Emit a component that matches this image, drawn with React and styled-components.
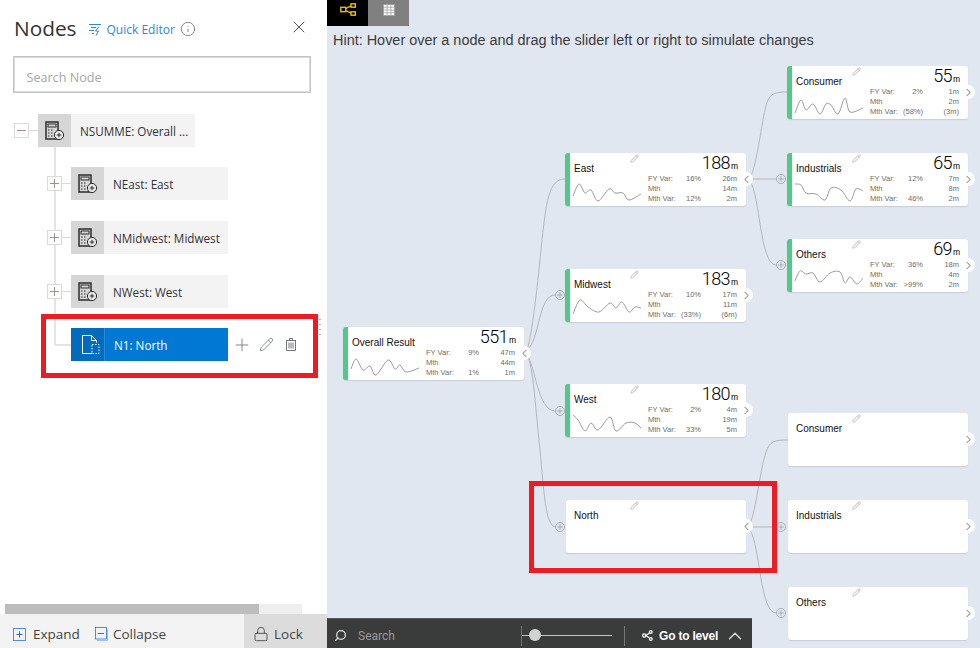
import React from "react";
import styled, { createGlobalStyle } from "styled-components";
import { ChevronLeft, ChevronRight, ChevronUp, Info, Lock, Pencil, Plus, Search, X } from "lucide-react";

const PANEL_WIDTH = 327;

const GlobalStyle = createGlobalStyle`
  html, body {
    margin: 0;
    padding: 0;
    height: 648px;
    overflow: hidden;
    background: #fff;
    font-family: "Liberation Sans", Arial, sans-serif;
  }
  * {
    box-sizing: border-box;
  }
`;

const Page = styled.div`
  display: grid;
  grid-template-columns: ${PANEL_WIDTH}px 1fr;
  width: 980px;
  height: 648px;
  overflow: hidden;
`;

/* ---------- left panel ---------- */

const Panel = styled.aside`
  position: relative;
  display: flex;
  flex-direction: column;
  height: 648px;
  background: #fff;
  font-family: "Open Sans", "Noto Sans", sans-serif;
  color: #333;
`;

const PanelHead = styled.header`
  display: flex;
  align-items: center;
  height: 56px;
  padding: 0 18.5px 0 14px;
`;

const PanelTitle = styled.h1`
  margin: 0;
  font-size: 20.8px;
  font-weight: 400;
  color: #333;
`;

const QuickEditor = styled.a`
  display: flex;
  align-items: center;
  gap: 4px;
  margin: 2px 0 0 12px;
  font-size: 12px;
  color: #2b88d8;
`;

const InfoIcon = styled(Info)`
  margin: 2px 0 0 5px;
  color: #777;
`;

const CloseIcon = styled(X)`
  margin: -2px 0 0 auto;
  color: #555;
`;

const SearchBox = styled.div`
  display: flex;
  align-items: center;
  width: 298px;
  height: 37px;
  margin-left: 13px;
  padding: 5px 0 0 12.5px;
  border: 1px solid #c4c4c4;
  box-shadow: inset 0 0 0 1px #dcdcdc;
  font-size: 12.6px;
  color: #a6a6a6;
`;

const Tree = styled.div`
  display: flex;
  flex-direction: column;
  gap: 20px;
  margin-top: 21px;
  padding-left: 14px;
`;

const TreeChildren = styled.div`
  position: relative;
  display: flex;
  flex-direction: column;
  gap: 21px;
  padding-left: 33px;

  &::before {
    content: "";
    position: absolute;
    left: 40px;
    top: -20px;
    bottom: 16px;
    width: 2px;
    background: #e4e4e4;
  }
`;

const TreeRow = styled.div`
  position: relative;
  display: flex;
  align-items: center;
  height: 33px;

  ${TreeChildren} > &:last-child {
    margin-top: -1px;
  }
`;

const Expander = styled.span`
  position: relative;
  display: flex;
  align-items: center;
  justify-content: center;
  width: 15px;
  height: 15px;
  margin-right: 9px;
  border: 1px solid #dadada;
  background: #fff;
  color: #a39090;
  z-index: 1;

  &::after {
    content: "";
    position: absolute;
    left: 14px;
    top: 6px;
    width: 9px;
    height: 1px;
    background: #dadada;
  }
`;

const LeafStub = styled.span`
  width: 16px;
  height: 2px;
  margin-left: 8px;
  background: #e4e4e4;
`;

const NodeIcon = styled.span`
  display: flex;
  align-items: center;
  justify-content: center;
  width: 33px;
  height: 33px;
  background: ${(p) => (p.$selected ? "#006cbe" : "#d6d6d6")};

  svg {
    margin-left: ${(p) => (p.$selected ? "6px" : "0")};
  }
`;

const NodeLabel = styled.span`
  display: flex;
  align-items: center;
  width: 124px;
  height: 33px;
  padding-left: 9px;
  font-size: 11.7px;
  white-space: nowrap;
  background: ${(p) => (p.$selected ? "#0078d4" : "#f3f3f3")};
  color: ${(p) => (p.$selected ? "#fff" : "#333")};
  border-left: ${(p) => (p.$selected ? "1px solid #2b88d8" : "none")};
`;

const RowActions = styled.div`
  display: flex;
  align-items: center;
  gap: 7px;
  margin-left: 4px;
  color: #7d8496;

  svg:last-child {
    margin-left: 5px;
  }
`;

const DragDots = styled.div`
  position: absolute;
  left: 316px;
  top: 319px;
  display: grid;
  grid-template-columns: 2px 2px;
  gap: 4px 1px;

  span {
    width: 2px;
    height: 1px;
    background: #b5b5b5;
  }
`;

const ScrollTrack = styled.div`
  width: 297px;
  height: 10px;
  margin: auto 0 0 5px;
  background: #eeeeee;
`;

const ScrollThumb = styled.div`
  width: 254px;
  height: 10px;
  background: #bdbdbd;
`;

const PanelFoot = styled.footer`
  display: flex;
  align-items: stretch;
  height: 34px;
  background: #f3f3f3;
  font-size: 13.5px;
  color: #444;
`;

const FootButton = styled.span`
  display: flex;
  align-items: center;
  gap: ${(p) => p.$iconGap}px;
  padding-top: 6px;
  margin-left: ${(p) => p.$gap}px;
`;

const LockButton = styled.span`
  display: flex;
  align-items: center;
  gap: 5px;
  width: 83px;
  margin-left: auto;
  padding: 6px 0 0 9px;
  background: #dcdcdc;
`;

const RedBox = styled.div`
  position: absolute;
  left: ${(p) => p.$x}px;
  top: ${(p) => p.$y}px;
  width: ${(p) => p.$w}px;
  height: ${(p) => p.$h}px;
  border: 5px solid #ed1c24;
  z-index: 5;
  pointer-events: none;
`;

/* ---------- canvas ---------- */

const Canvas = styled.main`
  position: relative;
  display: flex;
  flex-direction: column;
  height: 648px;
  background: #e1e7f0;
`;

const Tabs = styled.div`
  display: flex;
  height: 26px;
`;

const Tab = styled.span`
  display: flex;
  justify-content: center;
  width: 41px;
  height: 26px;
  padding-top: ${(p) => (p.$active ? "3px" : "4px")};
  background: ${(p) => (p.$active ? "#000" : "#808080")};
`;

const Hint = styled.p`
  margin: 6px 0 0 6px;
  font-size: 14.45px;
  line-height: 16px;
  color: #3c3c3c;
`;

const Links = styled.svg`
  position: absolute;
  left: 0;
  top: 0;
  width: 653px;
  height: 648px;
`;

const Card = styled.div`
  position: absolute;
  left: ${(p) => p.$x - PANEL_WIDTH + (p.$filled ? 0 : 1)}px;
  top: ${(p) => p.$y}px;
  display: grid;
  grid-template-columns: 78px 1fr;
  width: ${(p) => (p.$filled ? 181 : 180)}px;
  height: 53px;
  padding-left: ${(p) => (p.$filled ? "0" : "4px")};
  background: #fff;
  border-radius: 3px;
  border-left: ${(p) => (p.$filled ? "5px solid #4fcb86" : "none")};
  box-shadow: 0 1px 1px rgba(120, 130, 150, 0.25);
`;

const CardTitle = styled.div`
  position: relative;
  padding: 9.5px 0 0 4px;
  font-size: 10px;
  line-height: 12px;
  color: #111;
`;

const Spark = styled.svg`
  position: absolute;
  left: -5px;
  top: 0;
  width: 85px;
  height: 53px;
`;

const CardData = styled.div`
  display: flex;
  flex-direction: column;
  padding-right: 8px;
`;

const CardValue = styled.div`
  height: 21px;
  padding-top: 1px;
  text-align: right;
  font-family: "Roboto", "Liberation Sans", sans-serif;
  font-size: 18px;
  font-weight: 300;
  line-height: 18px;
  letter-spacing: -0.6px;
  color: #000;

  small {
    margin-left: 1px;
    font-family: "Liberation Sans", sans-serif;
    font-size: 8.5px;
    font-weight: 400;
    letter-spacing: 0;
  }
`;

const Stats = styled.div`
  display: grid;
  grid-template-columns: 32px 21px 36px;
  grid-auto-rows: 10px;
  font-size: 7.5px;
  line-height: 10px;
  color: #6c6c6c;

  span:not(:nth-child(3n + 1)) {
    text-align: right;
  }
`;

const CardPencil = styled(Pencil)`
  position: absolute;
  left: 60px;
  top: 1px;
  color: #d0d0d4;
`;

const Toggle = styled.span`
  position: absolute;
  right: -7px;
  top: 19px;
  display: flex;
  align-items: center;
  justify-content: center;
  width: 14px;
  height: 14px;
  border-radius: 50%;
  background: #fff;
  color: #8a8a8a;
`;

const AddDot = styled.span`
  position: absolute;
  left: ${(p) => p.$x - PANEL_WIDTH - 5}px;
  top: ${(p) => p.$y - 5}px;
  display: flex;
  align-items: center;
  justify-content: center;
  width: 10px;
  height: 10px;
  border: 1px solid #a8adb5;
  border-radius: 50%;
  background: #e1e7f0;
  color: #a0a5ad;
`;

const ToolBar = styled.div`
  position: relative;
  display: flex;
  align-items: center;
  width: 425px;
  height: 30px;
  margin-top: auto;
  padding-top: 4px;
  background: #3a3b3b;
  border-top: 1px solid #55585c;
  color: #fff;
  z-index: 3;
`;

const ToolSearch = styled.span`
  display: flex;
  align-items: center;
  gap: 11px;
  width: 194px;
  padding-left: 7px;
  font-family: "Roboto", "Liberation Sans", sans-serif;
  font-size: 12px;
  color: #9a9a9a;
`;

const MirrorSearch = styled(Search)`
  transform: scaleX(-1);
  color: #e6e6e6;
`;

const Divider = styled.span`
  width: 1px;
  height: 20px;
  background: #777;
`;

const Slider = styled.span`
  position: relative;
  width: 90px;
  height: 1px;
  margin-right: 12px;
  background: #c4c4c4;

  &::before {
    content: "";
    position: absolute;
    left: 7px;
    top: -6px;
    width: 12px;
    height: 12px;
    border-radius: 50%;
    background: #d2d2d2;
  }
`;

const LevelButton = styled.span`
  display: flex;
  align-items: center;
  gap: 6px;
  margin-left: 17px;
  font-size: 12px;
  font-weight: 700;
  letter-spacing: -0.2px;
`;

const LevelChevron = styled(ChevronUp)`
  color: #ddd;
`;

/* ---------- drawings ---------- */

const FlowIcon = () => (
  <svg width="16" height="13" viewBox="0 0 16 13" fill="none" stroke="#e8bc00" strokeWidth="1.4">
    <rect x="0.8" y="4.3" width="5" height="4.400" />
    <rect x="11" y="0.8" width="4.3" height="3.400" />
    <rect x="11" y="8.800" width="4.3" height="3.400" />
    <path d="M5.800 5.500L11 2.800M5.800 7.500L11 10.200" />
  </svg>
);

const LevelIcon = () => (
  <svg width="11" height="11" viewBox="0 0 11 11" fill="none" stroke="#fff" strokeWidth="1.200">
    <circle cx="2.200" cy="5.500" r="1.600" />
    <circle cx="8.800" cy="2" r="1.400" />
    <circle cx="8.800" cy="9" r="1.400" />
    <path d="M3.800 5.500L7.500 3M3.800 5.500L7.500 8" />
  </svg>
);

const GridIcon = () => (
  <svg width="12" height="12" viewBox="0 0 13 13" fill="#fff" stroke="#9a9a9a" strokeWidth="0.8">
    <rect x="0.5" y="0.5" width="12" height="12" />
    <path d="M0.5 3.5h12M0.5 6.5h12M0.5 9.5h12M4.5 0.5v12M8.5 0.5v12" />
  </svg>
);

const CalcIcon = () => (
  <svg width="20" height="20" viewBox="0 0 20 20" fill="none">
    <rect x="1" y="1" width="12" height="17" stroke="#2c2c2c" strokeWidth="1.5" />
    <rect x="3" y="3" width="8" height="3" stroke="#2c2c2c" />
    <path d="M3 9h1.5M6 9h1.5M3 12h1.5M6 12h1.5M3 15h1.5M6 15h1.5" stroke="#2c2c2c" />
    <circle cx="14" cy="14" r="4.6" fill="#e8e8e8" stroke="#2c2c2c" />
    <path d="M14 11.8v4.4M11.8 14h4.4" stroke="#2c2c2c" />
  </svg>
);

const DocIcon = () => (
  <svg width="20" height="21" viewBox="0 0 20 21" fill="none" stroke="#fff">
    <path d="M11 19.5H1.5v-18h9l5 5v2" />
    <path d="M10.500 1.500v5h5" />
    <path d="M11 10.500h7v9h-7z" strokeDasharray="1.500 1.500" />
  </svg>
);

const QuickIcon = () => (
  <svg width="14" height="13" viewBox="0 0 14 13" fill="none" stroke="#2b88d8">
    <path d="M1 1.500h12M3 4.500h5M1 7.500h5M4 10.500h2" />
    <path d="M11 3.500L7.500 8h3L8 12.500" />
  </svg>
);

const TrashIcon = () => (
  <svg width="10" height="13" viewBox="0 0 10 13" fill="none" stroke="#6e7480">
    <path d="M0 2.500h10M3.500 2.500v-2h3v2M0.500 2.500v10h9v-10" />
    <path d="M3 4.500v6M5 4.500v6M7 4.500v6" />
  </svg>
);

const ExpandIcon = () => (
  <svg width="13" height="13" viewBox="0 0 13 13" fill="none" stroke="#4a8fdc">
    <rect x="0.500" y="0.500" width="12" height="12" />
    <path d="M6.500 3.500v6M3.500 6.500h6" stroke="#2b6fc4" />
  </svg>
);

const CollapseIcon = () => (
  <svg width="13" height="14" viewBox="0 0 13 14" fill="none" stroke="#4a8fdc">
    <rect x="0.500" y="0.500" width="11" height="11.500" />
    <path d="M3 6.500h6" stroke="#2b6fc4" />
    <path d="M12.500 2v11.500H2" stroke="#9cc3ee" />
  </svg>
);

// smooth line through the sampled points
const sparkPath = (pts) => {
  let d = `M${pts[0][0]} ${pts[0][1]}`;
  for (let i = 0; i < pts.length - 1; i++) {
    const a = pts[i - 1] || pts[i];
    const b = pts[i];
    const c = pts[i + 1];
    const e = pts[i + 2] || c;
    const c1 = [b[0] + (c[0] - a[0]) / 6, b[1] + (c[1] - a[1]) / 6];
    const c2 = [c[0] - (e[0] - b[0]) / 6, c[1] - (e[1] - b[1]) / 6];
    d += ` C${c1[0]} ${c1[1]} ${c2[0]} ${c2[1]} ${c[0]} ${c[1]}`;
  }
  return d;
};

/* ---------- data ---------- */

const cards = [
  {
    id: "overall", x: 343, y: 327, title: "Overall Result", value: "551", open: true, noPencil: true,
    stats: ["9%", "47m", "44m", "1%", "1m"],
    spark: [[8, 42], [13, 32], [20, 43], [27, 39], [33, 48], [45, 33], [52, 42], [57, 38], [63, 45], [76, 41]],
  },
  {
    id: "east", x: 565, y: 153, title: "East", value: "188", open: true,
    stats: ["16%", "26m", "14m", "12%", "2m"],
    spark: [[8, 43], [14, 31], [20, 40], [26, 37], [33, 48], [44, 36], [50, 40], [58, 40], [64, 47], [76, 41]],
  },
  {
    id: "midwest", x: 565, y: 269, title: "Midwest", value: "183",
    stats: ["10%", "17m", "11m", "(33%)", "(6m)"],
    spark: [[8, 45], [15, 31], [23, 38], [34, 43], [45, 34], [51, 39], [57, 33], [64, 43], [70, 38], [76, 39]],
  },
  {
    id: "west", x: 565, y: 384, title: "West", value: "180",
    stats: ["2%", "4m", "19m", "33%", "5m"],
    spark: [[8, 31], [13, 36], [20, 47], [26, 39], [33, 46], [45, 33], [51, 47], [61, 39], [70, 39], [76, 44]],
  },
  { id: "north", x: 565, y: 500, title: "North", open: true },
  {
    id: "consumer", x: 787, y: 66, title: "Consumer", value: "55",
    stats: ["2%", "1m", "2m", "(58%)", "(3m)"],
    spark: [[8, 47], [14, 34], [19, 44], [26, 38], [33, 48], [39, 38], [44, 39], [51, 48], [58, 32], [63, 46], [76, 42]],
  },
  {
    id: "industrials", x: 787, y: 153, title: "Industrials", value: "65",
    stats: ["12%", "7m", "8m", "46%", "2m"],
    spark: [[8, 31], [14, 32], [19, 40], [29, 41], [38, 47], [44, 35], [54, 37], [63, 48], [69, 36], [76, 38]],
  },
  {
    id: "others", x: 787, y: 239, title: "Others", value: "69",
    stats: ["36%", "18m", "4m", ">99%", "2m"],
    spark: [[8, 42], [13, 32], [19, 35], [26, 34], [33, 43], [43, 34], [53, 33], [58, 44], [63, 38], [70, 45], [76, 39]],
  },
  { id: "consumer2", x: 787, y: 413, title: "Consumer" },
  { id: "industrials2", x: 787, y: 500, title: "Industrials" },
  { id: "others2", x: 787, y: 587, title: "Others" },
];

const addDots = [
  [560, 295], [560, 411], [560, 527], [781, 179], [781, 265], [781, 527], [781, 613],
];

const links = [
  "M527 350 C532 335 537 290 541 250 C546 200 549 179 565 179",
  "M527 350 C540 340 538 295 555 295",
  "M527 355 C535 365 538 411 555 411",
  "M527 355 C533 362 536 415 540 450 C544 490 545 527 556 527",
  "M750 178 C757 165 762 120 766 106 C769 95 772 92 787 92",
  "M752 179 H776",
  "M750 181 C760 195 760 265 776 265",
  "M750 524 C756 510 760 470 766 452 C770 441 774 440 788 440",
  "M752 527 H776",
  "M750 530 C760 545 760 613 776 613",
];

const children = ["NEast: East", "NMidwest: Midwest", "NWest: West"];

function NodeCard({ card }) {
  const filled = Boolean(card.value);
  return (
    <Card $x={card.x} $y={card.y} $filled={filled}>
      <CardTitle>
        {card.title}
        {card.spark && (
          <Spark viewBox="0 0 85 53" fill="none">
            <path d={sparkPath(card.spark)} stroke="#8f8f8f" strokeWidth="0.9" />
          </Spark>
        )}
        {!card.noPencil && <CardPencil size={9} strokeWidth={2.8} />}
      </CardTitle>
      {filled && (
        <CardData>
          <CardValue>
            {card.value}
            <small>m</small>
          </CardValue>
          <Stats>
            <span>FY Var:</span>
            <span>{card.stats[0]}</span>
            <span>{card.stats[1]}</span>
            <span>Mth</span>
            <span />
            <span>{card.stats[2]}</span>
            <span>Mth Var:</span>
            <span>{card.stats[3]}</span>
            <span>{card.stats[4]}</span>
          </Stats>
        </CardData>
      )}
      <Toggle>
        {card.open ? <ChevronLeft size={13} strokeWidth={1.9} /> : <ChevronRight size={13} strokeWidth={1.9} />}
      </Toggle>
    </Card>
  );
}

export default function App() {
  return (
    <Page>
      <GlobalStyle />
      <Panel>
        <PanelHead>
          <PanelTitle>Nodes</PanelTitle>
          <QuickEditor>
            <QuickIcon />
            Quick Editor
          </QuickEditor>
          <InfoIcon size={16} strokeWidth={1.3} />
          <CloseIcon size={20} strokeWidth={1.2} />
        </PanelHead>
        <SearchBox>Search Node</SearchBox>
        <Tree>
          <TreeRow>
            <Expander>
              <svg width="9" height="9" viewBox="0 0 9 9" stroke="currentColor">
                <path d="M0 4.500h9" />
              </svg>
            </Expander>
            <NodeIcon>
              <CalcIcon />
            </NodeIcon>
            <NodeLabel>NSUMME: Overall ...</NodeLabel>
          </TreeRow>
          <TreeChildren>
            {children.map((name) => (
              <TreeRow key={name}>
                <Expander>
                  <svg width="9" height="9" viewBox="0 0 9 9" stroke="currentColor">
                    <path d="M0 4.500h9M4.500 0v9" />
                  </svg>
                </Expander>
                <NodeIcon>
                  <CalcIcon />
                </NodeIcon>
                <NodeLabel>{name}</NodeLabel>
              </TreeRow>
            ))}
            <TreeRow>
              <LeafStub />
              <NodeIcon $selected>
                <DocIcon />
              </NodeIcon>
              <NodeLabel $selected>N1: North</NodeLabel>
              <RowActions>
                <Plus size={20} strokeWidth={1.2} />
                <Pencil size={15} strokeWidth={1.4} />
                <TrashIcon />
              </RowActions>
            </TreeRow>
          </TreeChildren>
        </Tree>
        <DragDots>
          {Array.from({ length: 8 }, (_, i) => (
            <span key={i} />
          ))}
        </DragDots>
        <RedBox $x={41} $y={314} $w={277} $h={64} />
        <ScrollTrack>
          <ScrollThumb />
        </ScrollTrack>
        <PanelFoot>
          <FootButton $gap={13} $iconGap={7}>
            <ExpandIcon />
            Expand
          </FootButton>
          <FootButton $gap={15} $iconGap={5}>
            <CollapseIcon />
            Collapse
          </FootButton>
          <LockButton>
            <Lock size={16} strokeWidth={1.3} />
            Lock
          </LockButton>
        </PanelFoot>
      </Panel>
      <Canvas>
        <Tabs>
          <Tab $active>
            <FlowIcon />
          </Tab>
          <Tab>
            <GridIcon />
          </Tab>
        </Tabs>
        <Hint>Hint: Hover over a node and drag the slider left or right to simulate changes</Hint>
        <Links viewBox={`${PANEL_WIDTH} 0 653 648`} fill="none">
          {links.map((d) => (
            <path key={d} d={d} stroke="#b3b6bc" strokeWidth="1" />
          ))}
        </Links>
        {cards.map((card) => (
          <NodeCard key={card.id} card={card} />
        ))}
        {addDots.map(([x, y]) => (
          <AddDot key={`${x}-${y}`} $x={x} $y={y}>
            <Plus size={8} strokeWidth={2.6} />
          </AddDot>
        ))}
        <RedBox $x={529 - PANEL_WIDTH} $y={481} $w={248} $h={92} />
        <ToolBar>
          <ToolSearch>
            <MirrorSearch size={13} strokeWidth={2.2} />
            Search
          </ToolSearch>
          <Divider />
          <Slider />
          <Divider />
          <LevelButton>
            <LevelIcon />
            Go to level
            <LevelChevron size={22} strokeWidth={1.5} />
          </LevelButton>
        </ToolBar>
      </Canvas>
    </Page>
  );
}
